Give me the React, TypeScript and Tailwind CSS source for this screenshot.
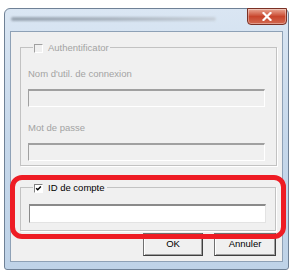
import React from "react";

const font = { fontFamily: '"Liberation Sans", Arial, sans-serif' };

function Check({ checked, disabled }: { checked?: boolean; disabled?: boolean }) {
  return (
    <div
      className={
        "w-[9px] h-[9px] border-t border-l flex items-center justify-center " +
        (disabled
          ? "border-[#a0a0a0] border-r border-b border-r-white border-b-white bg-[#f0f0f0]"
          : "border-[#808080] border-r border-b border-r-white border-b-white bg-white")
      }
    >
      {checked && (
        <svg width="9" height="9" viewBox="0 0 9 9">
          <path d="M1.5 4.2 L3.5 6.2 L7.5 2" stroke="#000" strokeWidth="1.8" fill="none" />
        </svg>
      )}
    </div>
  );
}

export default function App() {
  return (
    <div className="w-[293px] h-[273px] bg-white relative overflow-hidden" style={font}>
      <div className="ml-[4px] mt-[8px] w-[285px] h-[262px] rounded-t-[6px] rounded-b-[3px] border border-[#6f8196] bg-gradient-to-b from-[#dae6f3] via-[#c6d8eb] to-[#bfd3e8] flex flex-col">
        {/* title bar */}
        <div className="h-[22px] flex items-start justify-between pl-[6px] pr-[1px]">
          <div className="mt-[8px] w-[205px] h-[4px] bg-gradient-to-r from-[#8a96a3] via-[#a0aab5] to-[#c4ccd4] blur-[1.2px] rounded-full opacity-80" />
          <div className="w-[40px] h-[17px] -mt-[1px] rounded-b-[4px] border border-[#7a3125] bg-gradient-to-b from-[#e8a795] via-[#c8452c] to-[#d26850] flex items-center justify-center shadow-[inset_0_0_0_1px_rgba(255,255,255,0.35)]">
            <svg width="10" height="9" viewBox="0 0 10 9">
              <path d="M1.5 1 L8.5 8 M8.5 1 L1.5 8" stroke="#fff" strokeWidth="2.2" strokeLinecap="square" />
            </svg>
          </div>
        </div>
        {/* client */}
        <div className="mx-[5px] w-[273px] h-[231px] bg-[#f0f0f0] border border-[#8ea1b6] relative text-[9.5px]">
          {/* group 1 */}
          <div className="ml-[9px] mt-[15px] w-[257px] h-[119px] border border-[#c2c2c2] shadow-[1px_1px_0_0_#ffffff] relative">
            <div className="absolute -top-[6px] left-[12px] px-[1px] bg-[#f0f0f0] flex items-center gap-[5px] pr-[1px]">
              <Check disabled />
              <span className="text-[#a3a3a3] leading-[12px]">Authentificator</span>
            </div>
            <div className="pl-[7px] pt-[20px] text-[#a3a3a3] leading-[12px]">Nom d'util. de connexion</div>
            <div className="ml-[7px] mt-[9px] w-[237px] h-[18px] border-t-2 border-l border-[#a0a0a0] border-r border-r-white border-b border-b-white bg-[#f0f0f0]" />
            <div className="pl-[7px] pt-[15px] text-[#a3a3a3] leading-[12px]">Mot de passe</div>
            <div className="ml-[7px] mt-[9px] w-[237px] h-[18px] border-t-2 border-l border-[#a0a0a0] border-r border-r-white border-b border-b-white bg-[#f0f0f0]" />
          </div>
          {/* group 2 */}
          <div className="ml-[9px] mt-[21px] w-[256px] h-[44px] border border-[#c2c2c2] shadow-[1px_1px_0_0_#ffffff] relative">
            <div className="absolute -top-[6px] left-[12px] px-[1px] bg-[#f0f0f0] flex items-center gap-[5px] pr-[2px]">
              <Check checked />
              <span className="text-black leading-[12px]">ID de compte</span>
            </div>
            <div className="ml-[8px] mt-[16px] w-[237px] h-[19px] border-t-2 border-l border-[#8a8a8a] border-r border-r-[#e3e3e3] border-b border-b-[#e3e3e3] bg-white" />
          </div>
          {/* buttons */}
          <div className="flex justify-end gap-[11px] pr-[6px] mt-[2px]">
            <div className="w-[60px] h-[23px] border border-[#707070] border-r-[#404040] border-b-[#404040] bg-[#f0f0f0] shadow-[inset_1px_1px_0_0_#ffffff,inset_-1px_-1px_0_0_#a0a0a0] flex items-center justify-center text-black">
              OK
            </div>
            <div className="w-[62px] h-[23px] border border-[#707070] border-r-[#404040] border-b-[#404040] bg-[#f0f0f0] shadow-[inset_1px_1px_0_0_#ffffff,inset_-1px_-1px_0_0_#a0a0a0] flex items-center justify-center text-black">
              Annuler
            </div>
          </div>
        </div>
      </div>
      {/* red highlight */}
      <div className="absolute left-[10px] top-[175px] w-[276px] h-[64px] border-[5px] border-[#ee1c24] rounded-[12px]" />
    </div>
  );
}
